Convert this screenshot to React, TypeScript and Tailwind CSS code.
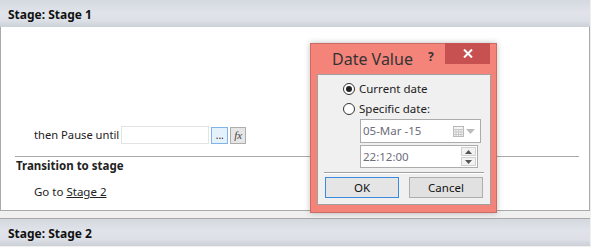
import React from "react";

const font = { fontFamily: '"Noto Sans", "Open Sans", sans-serif' };

function Radio({ checked }: { checked?: boolean }) {
  return (
    <div className="w-[12px] h-[12px] rounded-full border border-[#333333] bg-white flex items-center justify-center shrink-0">
      {checked && <div className="w-[6px] h-[6px] rounded-full bg-[#222222]" />}
    </div>
  );
}

function Header({ title }: { title: string }) {
  return (
    <div className="h-[27px] flex items-center pl-[8px] pt-[3px] bg-[linear-gradient(to_bottom,#d4d8df,#e0e4ea_45%,#dde1e7_75%,#cbcfd6)]">
      <span className="text-[12px] font-bold text-[#111111]">{title}</span>
    </div>
  );
}

export default function App() {
  return (
    <div className="relative w-[591px] h-[247px] bg-[#f0f0f0] overflow-hidden text-[#222222]" style={font}>
      {/* Stage 1 section */}
      <div className="w-[590px] border-b border-[#a9a9a9] bg-white">
        <Header title="Stage: Stage 1" />
        <div className="h-[183px] border-l border-r border-[#a9a9a9] flex flex-col">
          <div className="flex items-center h-[18px] mt-[99px] pl-[33px]">
            <span className="text-[11.2px] leading-none shrink-0 whitespace-nowrap">then Pause until</span>
            <div className="w-[88px] h-[18px] border border-[#e3e3e3] bg-white shrink-0 ml-[2px]" />
            <div className="w-[17px] h-[17px] ml-[2px] border border-[#7eb4ea] bg-[#e5f1fb] flex items-end justify-center pb-[3px] shrink-0">
              <span className="text-[10px] leading-none">...</span>
            </div>
            <div className="w-[16px] h-[17px] ml-[2px] border border-[#adadad] bg-[#e6e6e6] flex items-center justify-center shrink-0">
              <span className="text-[11px] italic leading-none text-[#444]" style={{ fontFamily: '"Liberation Serif", serif' }}>fx</span>
            </div>
          </div>
          <div className="ml-[14px] mt-[12px] w-[564px] h-[1px] bg-[#a9a9a9]" />
          <div className="pl-[15px] mt-[1px] h-[16px] flex items-center">
            <span className="text-[11.5px] font-bold whitespace-nowrap">Transition to stage</span>
          </div>
          <div className="pl-[33px] mt-[10px] h-[16px] flex items-center">
            <span className="text-[11.5px] whitespace-nowrap">
              Go to <span className="underline">Stage 2</span>
            </span>
          </div>
        </div>
      </div>
      {/* Stage 2 section */}
      <div className="mt-[7px] w-[590px] border-t border-[#a9a9a9]">
        <Header title="Stage: Stage 2" />
      </div>

      {/* Dialog */}
      <div className="absolute left-[310px] top-[43px] w-[187px] h-[170px] bg-[#f4837a] border border-[#c96d64] shadow-[0_0_6px_rgba(0,0,0,0.25)] pl-[6px] pt-[30px]">
        <div className="absolute left-[21px] top-[5px] text-[16px] leading-[20px] text-[#333333] whitespace-nowrap">Date Value</div>
        <div className="absolute left-[117px] top-[4px] text-[12px] font-bold text-[#333333]">?</div>
        <div className="absolute left-[134px] top-[-1px] w-[45px] h-[21px] bg-[#c75050] flex items-center justify-center">
          <svg width="10" height="9" viewBox="0 0 10 9">
            <path d="M1 0.5 L9 8.5 M9 0.5 L1 8.5" stroke="white" strokeWidth="2" />
          </svg>
        </div>
        <div className="w-[174px] h-[131px] bg-[#f0f0f0] border border-[#a0a0a0] flex flex-col text-[11.5px]">
          <div className="flex items-center gap-[4px] pl-[25px] mt-[8px] h-[12px]">
            <Radio checked />
            <span className="leading-none whitespace-nowrap">Current date</span>
          </div>
          <div className="flex items-center gap-[4px] pl-[25px] mt-[8px] h-[12px]">
            <Radio />
            <span className="leading-none whitespace-nowrap">Specific date:</span>
          </div>
          <div className="ml-[42px] mt-[4px] w-[121px] h-[24px] border border-[#acacac] bg-white flex items-center pl-[2px]">
            <span className="text-[#6d6d7d] leading-none whitespace-nowrap">05-Mar -15</span>
            <div className="ml-auto mr-[5px] flex items-center gap-[2px]">
              <svg width="11" height="11" viewBox="0 0 11 11">
                <rect x="0.5" y="0.5" width="10" height="10" fill="#f4f4f4" stroke="#b8b8b8" />
                <path d="M0.5 3.5 H10.5 M0.5 6 H10.5 M0.5 8.5 H10.5 M3 3.5 V10.5 M5.5 3.5 V10.5 M8 3.5 V10.5" stroke="#c8c8c8" strokeWidth="1" />
              </svg>
              <svg width="9" height="5" viewBox="0 0 9 5">
                <path d="M0 0 H9 L4.5 5 Z" fill="#bcbcbc" />
              </svg>
            </div>
          </div>
          <div className="ml-[42px] mt-[2px] w-[118px] h-[23px] border border-[#acacac] bg-white flex items-center pl-[2px]">
            <span className="text-[#6d6d7d] leading-none">22:12:00</span>
            <div className="ml-auto mr-[1px] w-[15px] h-[19px] flex flex-col gap-[1px]">
              <div className="flex-1 border border-[#d0d0d0] bg-[#f2f2f2] flex items-center justify-center">
                <svg width="7" height="4" viewBox="0 0 7 4"><path d="M0 4 H7 L3.5 0 Z" fill="#555" /></svg>
              </div>
              <div className="flex-1 border border-[#d0d0d0] bg-[#f2f2f2] flex items-center justify-center">
                <svg width="7" height="4" viewBox="0 0 7 4"><path d="M0 0 H7 L3.5 4 Z" fill="#555" /></svg>
              </div>
            </div>
          </div>
          <div className="ml-[6px] mt-[4px] w-[160px] h-[1px] bg-[#a0a0a0]" />
          <div className="ml-[6px] w-[160px] h-[1px] bg-white" />
          <div className="flex gap-[10px] ml-[7px] mt-[3px]">
            <div className="w-[74px] h-[21px] border border-[#3c8ae0] bg-[#e5e5e5] flex items-center justify-center">
              <span className="leading-none text-[#111]">OK</span>
            </div>
            <div className="w-[74px] h-[21px] border border-[#adadad] bg-[#e1e1e1] flex items-center justify-center">
              <span className="leading-none text-[#111]">Cancel</span>
            </div>
          </div>
        </div>
      </div>
    </div>
  );
}
